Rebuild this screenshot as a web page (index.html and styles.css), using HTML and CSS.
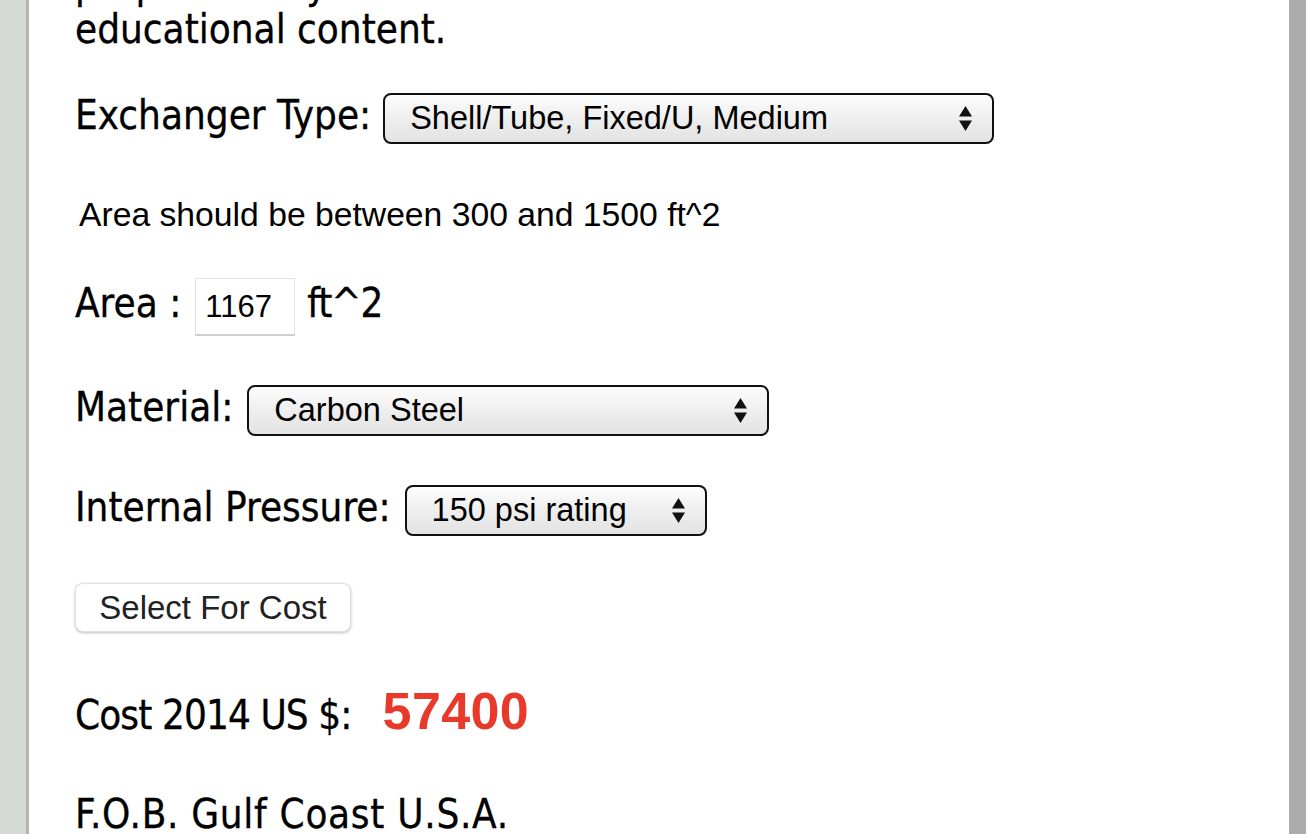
FILE: index.html
```html
<!DOCTYPE html>
<html>
<head>
<meta charset="utf-8">
<link rel="stylesheet" href="styles.css">
</head>
<body>
<div class="page">
  <div class="gutter"></div>
  <main class="content">
    <p class="intro">purposes only for<br>educational content.</p>

    <div class="row row-type">
      <span class="label">Exchanger Type:</span>
      <div class="select sel-type"><span class="sel-text">Shell/Tube, Fixed/U, Medium</span>
        <svg class="arrows" width="15" height="27" viewBox="0 0 15 27"><path d="M7.5 1 L14 11.5 L1 11.5 Z M7.5 26 L14 15.5 L1 15.5 Z" fill="#111"/></svg>
      </div>
    </div>

    <p class="hint">Area should be between 300 and 1500 ft^2</p>

    <div class="row row-area">
      <span class="label">Area :</span>
      <div class="input">1167</div>
      <span class="label unit">ft^2</span>
    </div>

    <div class="row row-mat">
      <span class="label">Material:</span>
      <div class="select sel-mat"><span class="sel-text">Carbon Steel</span>
        <svg class="arrows" width="15" height="27" viewBox="0 0 15 27"><path d="M7.5 1 L14 11.5 L1 11.5 Z M7.5 26 L14 15.5 L1 15.5 Z" fill="#111"/></svg>
      </div>
    </div>

    <div class="row row-press">
      <span class="label">Internal Pressure:</span>
      <div class="select sel-press"><span class="sel-text">150 psi rating</span>
        <svg class="arrows" width="15" height="27" viewBox="0 0 15 27"><path d="M7.5 1 L14 11.5 L1 11.5 Z M7.5 26 L14 15.5 L1 15.5 Z" fill="#111"/></svg>
      </div>
    </div>

    <div class="btn">Select For Cost</div>

    <div class="row row-cost">
      <span class="label cost-label">Cost 2014 US $:</span>
      <span class="cost">57400</span>
    </div>

    <p class="fob">F.O.B. Gulf Coast U.S.A.</p>
  </main>
  <div class="rail"></div>
</div>
</body>
</html>
```

FILE: styles.css
```css
html, body {
  margin: 0;
  padding: 0;
  height: 100%;
  overflow: hidden;
  background: #fff;
}
.page {
  display: flex;
  width: 1306px;
  height: 834px;
  overflow: hidden;
}
.gutter {
  width: 26px;
  flex: none;
  background: #d6dad7;
  border-right: 3px solid #b4b4b4;
}
.rail {
  width: 17px;
  flex: none;
  background: #ababab;
}
.content {
  flex: 1;
  background: #fff;
  padding-left: 46px;
  font-family: "DejaVu Sans Condensed", "DejaVu Sans", sans-serif;
  color: #000;
  font-size: 40px;
}
.intro, .label, .fob {
  -webkit-text-stroke: 0.3px #000;
}
.intro {
  margin: -38px 0 0 0;
  line-height: 45px;
}
.row {
  display: flex;
  align-items: baseline;
}
.label {
  line-height: 44px;
}
.row-type { margin-top: 41px; }
.select {
  display: flex;
  align-items: center;
  justify-content: space-between;
  box-sizing: border-box;
  height: 51px;
  border: 2px solid #111;
  border-radius: 8px;
  background: linear-gradient(#fdfdfd, #ededed 55%, #e3e3e3);
  font-family: "Liberation Sans", Arial, sans-serif;
  font-size: 32.5px;
  padding: 0 19px 0 25px;
  margin-left: 14px;
}
.sel-type { width: 611px; margin-left: 12px; }
.sel-mat { width: 522px; }
.sel-press { width: 302px; }
.hint {
  margin: 50px 0 0 4px;
  font-family: "Liberation Sans", Arial, sans-serif;
  font-size: 33.7px;
  line-height: 40px;
}
.row-area { margin-top: 44px; }
.input {
  box-sizing: border-box;
  width: 100px;
  height: 58px;
  margin-left: 14px;
  border: 1px solid #e2e2e2;
  border-bottom: 2px solid #cfcfcf;
  font-family: "Liberation Sans", Arial, sans-serif;
  font-size: 31px;
  line-height: 34px;
  padding: 11px 0 0 9px;
}
.unit { margin-left: 12px; letter-spacing: -1px; }
.row-mat { margin-top: 49px; }
.row-press { margin-top: 49px; }
.btn {
  margin-top: 47px;
  width: 276px;
  height: 49px;
  box-sizing: border-box;
  border-radius: 8px;
  background: #fff;
  border: 1px solid #e0e0e0;
  box-shadow: 0 1px 3px rgba(0,0,0,0.25);
  font-family: "Liberation Sans", Arial, sans-serif;
  font-size: 33px;
  color: #222;
  display: flex;
  align-items: center;
  justify-content: center;
}
.row-cost { margin-top: 57px; }
.cost-label { letter-spacing: -0.9px; }
.cost {
  margin-left: 31px;
  font-family: "Liberation Sans", Arial, sans-serif;
  font-weight: bold;
  font-size: 52px;
  letter-spacing: 0.4px;
  line-height: 44px;
  color: #e8392a;
}
.fob {
  margin: 55px 0 0 0;
  line-height: 44px;
  letter-spacing: 0.7px;
}
```
